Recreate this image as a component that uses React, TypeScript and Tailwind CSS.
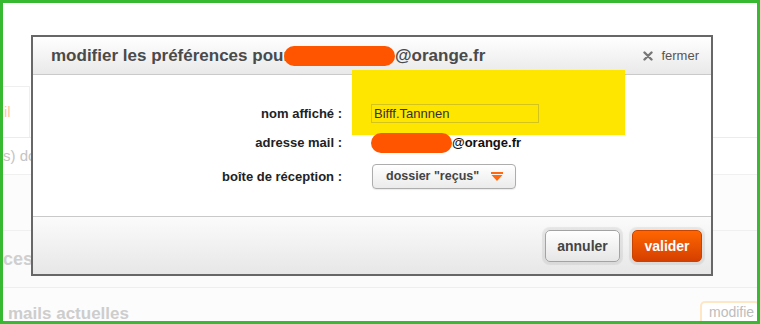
import React from "react";

function CloseX() {
  return (
    <svg width="10" height="10" viewBox="0 0 10 10" className="block">
      <path d="M1.5 1.5 L8.5 8.5 M8.5 1.5 L1.5 8.5" stroke="#777" strokeWidth="2.4" strokeLinecap="round" />
    </svg>
  );
}

function SelectArrow() {
  return (
    <svg width="12" height="9" viewBox="0 0 12 9" className="block">
      <rect x="0" y="0" width="12" height="2" fill="#ff6a10" />
      <polygon points="0.5,3 11.5,3 6,9" fill="#ff6a10" />
    </svg>
  );
}

export default function App() {
  return (
    <div className="relative w-[760px] h-[324px] overflow-hidden border-[3px] border-[#38b932] bg-white font-['Liberation_Sans',Arial,sans-serif]">
      {/* faded page behind the dialog */}
      <div className="flex flex-col h-full">
        <div className="h-[83px]" />
        <div className="h-[51px] flex">
          <div className="w-[27px] border-t border-r border-[#efefef] flex items-center text-[15px] text-[#ffc7a3] pl-[1px]">il</div>
          <div className="flex-1" />
        </div>
        <div className="h-[37px] border-t border-[#ececec] flex items-center text-[15px] text-[#c4c4c4] pl-0">s) do</div>
        <div className="h-[56px] border-t border-[#f0f0f0] bg-[#fcfcfc]" />
        <div className="h-[57px] border-t border-[#f0f0f0] bg-[#fbfbfb] flex items-center text-[18px] font-bold text-[#cfcfcf]">ces</div>
        <div className="flex-1 border-t border-[#eeeeee] bg-[#fcfcfc] flex items-end justify-between">
          <div className="pl-[5px] text-[17px] font-bold text-[#cdcdcd] leading-none translate-y-[1px]">mails actuelles</div>
          <div className="h-[20px] w-[60px] mr-[-3px] rounded-t-[5px] border-2 border-b-0 border-[#ffe6c4] bg-white text-[14px] text-[#bdbdbd] pl-[7px] pt-[2px] leading-none">modifie</div>
        </div>
      </div>

      {/* dialog */}
      <div className="absolute left-[28px] top-[32px] w-[682px] h-[241px] border-2 border-[#676767] bg-white flex flex-col">
        {/* yellow highlight annotation */}
        <div className="absolute left-[319px] top-[33px] w-[273px] h-[65px] bg-[#ffe600] z-10" />

        <div className="h-[38px] shrink-0 border-b border-[#cacaca] bg-gradient-to-b from-white to-[#e9e9e9] flex items-center pl-[18px] pr-[12px]">
          <div className="flex items-center text-[17px] font-bold text-[#4a4a4a] whitespace-nowrap">
            <span>modifier les préférences pour</span>
            <span className="inline-block ml-[-6px] w-[111px] h-[20px] rounded-full bg-[#ff5500]" />
            <span>@orange.fr</span>
          </div>
          <div className="ml-auto flex items-center gap-[8px] text-[13px] text-[#555]">
            <CloseX />
            <span>fermer</span>
          </div>
        </div>

        <div className="h-[142px] shrink-0 border-b border-[#c9c9c9] pt-[29px] text-[13px]">
          <div className="relative z-20 flex items-center h-[19px]">
            <div className="w-[309px] text-right font-bold text-[#222]">nom affiché :</div>
            <div className="ml-[29px] w-[168px] h-[19px] border border-[#d2c41c] flex items-center pl-[2px] text-[#333]">Bifff.Tannnen</div>
          </div>
          <div className="relative z-20 flex items-center h-[20px] mt-[10px]">
            <div className="w-[309px] text-right font-bold text-[#222]">adresse mail :</div>
            <div className="ml-[29px] flex items-center">
              <span className="inline-block w-[81px] h-[20px] rounded-full bg-[#ff5500]" />
              <span className="font-bold text-[#111]">@orange.fr</span>
            </div>
          </div>
          <div className="relative z-20 flex items-center h-[25px] mt-[11px]">
            <div className="w-[309px] text-right font-bold text-[#222]">boîte de réception :</div>
            <div className="ml-[30px] w-[144px] h-[25px] rounded-[4px] border border-[#adadad] bg-gradient-to-b from-white to-[#ebebeb] shadow-[0_1px_1px_rgba(0,0,0,0.08)] flex items-center justify-between pl-[13px] pr-[12px]">
              <span className="font-bold text-[#444] text-[12.5px]">dossier "reçus"</span>
              <SelectArrow />
            </div>
          </div>
        </div>

        <div className="flex-1 bg-gradient-to-b from-[#fbfbfb] to-[#e7e7e7] flex justify-end items-start pt-[13px] pr-[9px] gap-[12px]">
          <div className="w-[75px] h-[32px] rounded-[5px] border border-[#a3a3a3] bg-gradient-to-b from-white to-[#e6e6e6] shadow-[0_0_1px_3px_rgba(0,0,0,0.07)] flex items-center justify-center text-[14px] font-bold text-[#444]">annuler</div>
          <div className="w-[70px] h-[32px] rounded-[5px] border border-[#c94300] bg-gradient-to-b from-[#ff6600] to-[#d53f00] shadow-[0_0_1px_3px_rgba(0,0,0,0.07)] flex items-center justify-center text-[14px] font-bold text-white">valider</div>
        </div>
      </div>
    </div>
  );
}
